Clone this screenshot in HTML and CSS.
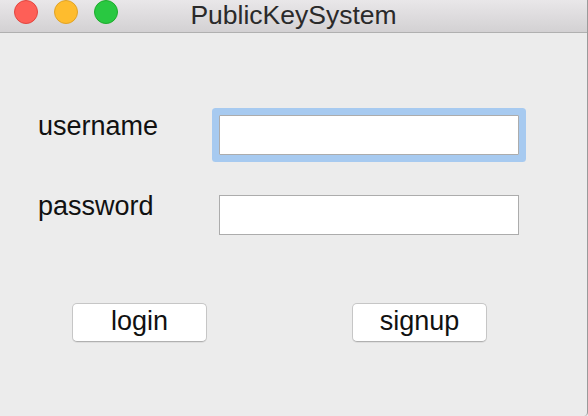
FILE: index.html
```html
<!DOCTYPE html>
<html>
<head>
<meta charset="utf-8">
<link rel="stylesheet" href="styles.css">
</head>
<body>
<div class="window">
  <div class="titlebar">
    <div class="lights">
      <span class="light red"></span>
      <span class="light yellow"></span>
      <span class="light green"></span>
    </div>
    <div class="title">PublicKeySystem</div>
  </div>
  <div class="content">
    <div class="form">
      <div class="row">
        <label class="label">username</label>
        <div class="field focused"></div>
      </div>
      <div class="row">
        <label class="label">password</label>
        <div class="field"></div>
      </div>
    </div>
    <div class="buttons">
      <button class="btn">login</button>
      <button class="btn">signup</button>
    </div>
  </div>
</div>
</body>
</html>
```
FILE: styles.css
```css
html, body {
  margin: 0;
  padding: 0;
  width: 588px;
  height: 416px;
  overflow: hidden;
  background: #ececec;
  font-family: "Liberation Sans", Arial, sans-serif;
}
.window {
  width: 587px;
  height: 416px;
  border-right: 1px solid #9a9a9a;
  display: flex;
  flex-direction: column;
  background: #ececec;
  border-bottom-right-radius: 4px;
}
.titlebar {
  height: 32px;
  border-bottom: 1px solid #b0b0b0;
  background: linear-gradient(#e9e7e9, #d3d1d3);
  display: flex;
  align-items: center;
  justify-content: center;
  flex-shrink: 0;
  position: relative;
}
.lights {
  position: absolute;
  left: 14px;
  top: 0;
  display: flex;
  gap: 16px;
}
.light {
  width: 22px;
  height: 22px;
  border-radius: 50%;
  border: 1px solid;
  box-sizing: content-box;
}
.red { background: #fe5f57; border-color: #e2463f; }
.yellow { background: #febc2e; border-color: #e0a326; }
.green { background: #29c841; border-color: #1dac2c; }
.title {
  font-size: 26.5px;
  color: #2a2a2a;
  line-height: 28px;
  margin-top: -3px;
}
.content {
  flex: 1;
  display: flex;
  flex-direction: column;
  padding: 82px 0 0 38px;
}
.form {
  display: flex;
  flex-direction: column;
  gap: 40px;
}
.row {
  display: flex;
  height: 40px;
}
.label {
  width: 181px;
  font-size: 27px;
  line-height: 22px;
  color: #111;
}
.field {
  width: 298px;
  height: 38px;
  border: 1px solid #acacac;
  background: #fff;
}
.field.focused {
  box-shadow: 0 0 0 7px #a7caf0;
  border-radius: 1px;
}
.buttons {
  display: flex;
  gap: 145px;
  padding-left: 34px;
  margin-top: 68px;
}
.btn {
  width: 135px;
  height: 39px;
  background: #fff;
  border: 1px solid #c6c6c6;
  border-bottom-color: #b0b0b0;
  border-radius: 5px;
  font-family: "Liberation Sans", Arial, sans-serif;
  font-size: 27px;
  color: #111;
  padding: 0 0 2px 0;
  box-shadow: 0 1px 0 rgba(0,0,0,0.06);
}
```
